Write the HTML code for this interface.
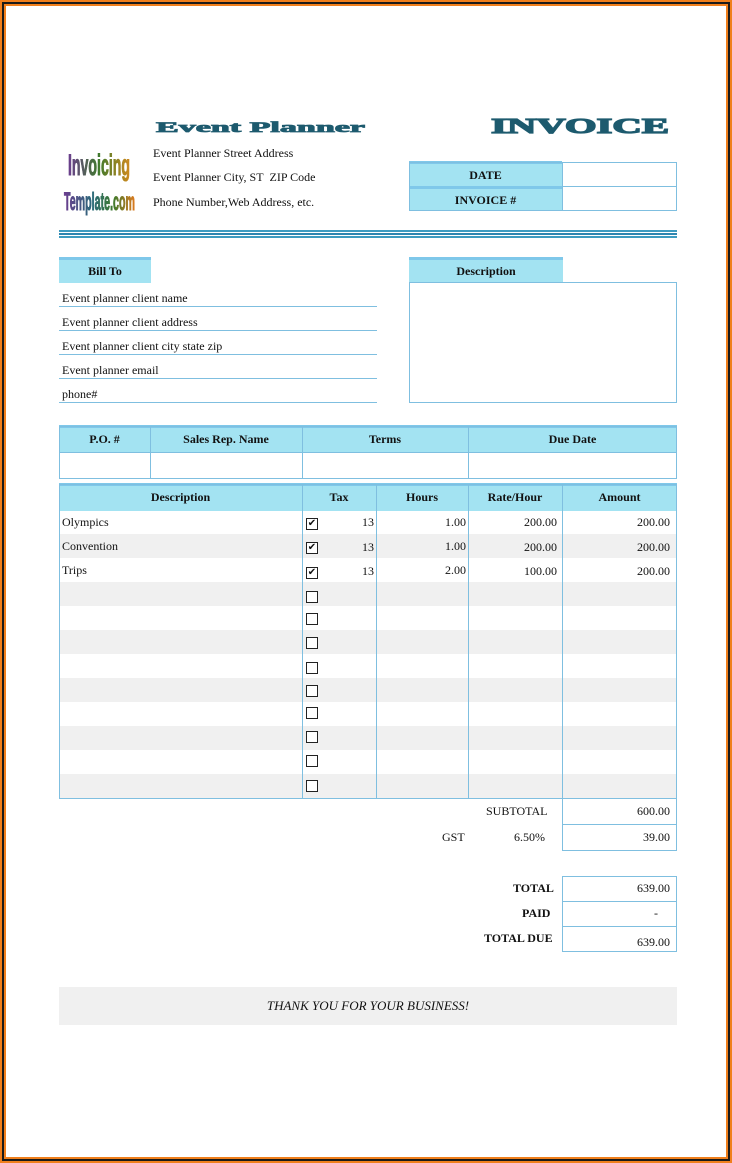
<!DOCTYPE html>
<html><head><style>
*{margin:0;padding:0;box-sizing:border-box}
body{width:732px;height:1163px;background:#fff;position:relative;font-family:"Liberation Serif",serif;font-size:12px;color:#111;overflow:hidden}
.frame{position:absolute;left:0;top:0;width:732px;height:1163px;border:2px solid #f07f1c;}
.frame2{position:absolute;left:2px;top:2px;width:728px;height:1159px;border:2px solid #1a1a1a;}
.frame3{position:absolute;left:4px;top:4px;width:724px;height:1155px;border:2px solid #f07f1c;}
.a{position:absolute}
.hd{background:#a3e3f2;font-weight:bold;text-align:center;border-top:3px solid #7fc8ea}
.bx{border:1px solid #7fbfe0}
.ln{position:absolute;height:1px;background:#7fbfe0}
.vl{position:absolute;width:1px;background:#7fbfe0}
.cb{position:absolute;width:12px;height:12px;border:1px solid #222;background:#fff;font-size:10px;line-height:10px;text-align:center}
.r{text-align:right}
</style></head><body>
<div class="frame"></div><div class="frame2"></div><div class="frame3"></div>

<svg class="a" style="left:0;top:0" width="732" height="230">
<defs>
<linearGradient id="g1" x1="0" x2="1"><stop offset="0" stop-color="#6b3d8f"/><stop offset="0.5" stop-color="#3f7a2c"/><stop offset="1" stop-color="#d08a1e"/></linearGradient>
<linearGradient id="g2" x1="0" x2="1"><stop offset="0" stop-color="#6b3d8f"/><stop offset="0.4" stop-color="#2a6a7a"/><stop offset="0.7" stop-color="#3f7a2c"/><stop offset="1" stop-color="#e07a1e"/></linearGradient>
</defs>
<text x="156" y="132" textLength="209" lengthAdjust="spacingAndGlyphs" font-family="Liberation Serif" font-weight="bold" font-size="15" fill="#1d5a6e" stroke="#1d5a6e" stroke-width="0.8">Event Planner</text>
<text x="491" y="133" textLength="178" lengthAdjust="spacingAndGlyphs" font-family="Liberation Serif" font-weight="bold" font-size="21" fill="#1d5a6e" stroke="#1d5a6e" stroke-width="1.2">INVOICE</text>
<text x="68" y="175" textLength="62" lengthAdjust="spacingAndGlyphs" font-family="Liberation Sans" font-weight="bold" font-size="30" fill="url(#g1)" stroke="url(#g1)" stroke-width="1">Invoicing</text>
<text x="64" y="210" textLength="71" lengthAdjust="spacingAndGlyphs" font-family="Liberation Sans" font-weight="bold" font-size="25" fill="url(#g2)" stroke="url(#g2)" stroke-width="1">Template.com</text>
</svg>
<div class="a" style="left:153px;top:146px">Event Planner Street Address</div>
<div class="a" style="left:153px;top:170px">Event Planner City, ST&nbsp; ZIP Code</div>
<div class="a" style="left:153px;top:195px">Phone Number,Web Address, etc.</div>

<div class="a hd" style="left:409px;top:161px;width:153px;height:25px;line-height:22px">DATE</div>
<div class="a hd" style="left:409px;top:186px;width:153px;height:25px;line-height:22px">INVOICE #</div>
<div class="a bx" style="left:409px;top:162px;width:268px;height:49px"></div>
<div class="ln" style="left:562px;top:186px;width:115px"></div>
<div class="vl" style="left:562px;top:162px;height:49px"></div>

<div class="a" style="left:59px;top:230px;width:618px;height:2px;background:#3d9bc0"></div>
<div class="a" style="left:59px;top:233px;width:618px;height:2px;background:#2e86b0"></div>
<div class="a" style="left:59px;top:236px;width:618px;height:2px;background:#3d9bc0"></div>

<div class="a hd" style="left:59px;top:257px;width:92px;height:26px;line-height:23px">Bill To</div>
<div class="a" style="left:62px;top:291px">Event planner client name</div>
<div class="a" style="left:62px;top:315px">Event planner client address</div>
<div class="a" style="left:62px;top:339px">Event planner client city state zip</div>
<div class="a" style="left:62px;top:363px">Event planner email</div>
<div class="a" style="left:62px;top:387px">phone#</div>
<div class="ln" style="left:59px;top:306px;width:318px"></div>
<div class="ln" style="left:59px;top:330px;width:318px"></div>
<div class="ln" style="left:59px;top:354px;width:318px"></div>
<div class="ln" style="left:59px;top:378px;width:318px"></div>
<div class="ln" style="left:59px;top:402px;width:318px"></div>

<div class="a hd" style="left:409px;top:257px;width:154px;height:26px;line-height:23px">Description</div>
<div class="a bx" style="left:409px;top:282px;width:268px;height:121px"></div>

<div class="a hd" style="left:59px;top:425px;width:618px;height:28px"></div>
<div class="a bx" style="left:59px;top:426px;width:618px;height:53px"></div>
<div class="ln" style="left:59px;top:452px;width:618px"></div>
<div class="vl" style="left:150px;top:426px;height:53px"></div>
<div class="vl" style="left:302px;top:426px;height:53px"></div>
<div class="vl" style="left:468px;top:426px;height:53px"></div>
<div class="a" style="left:59px;top:432px;width:91px;text-align:center;font-weight:bold">P.O. #</div>
<div class="a" style="left:150px;top:432px;width:152px;text-align:center;font-weight:bold">Sales Rep. Name</div>
<div class="a" style="left:302px;top:432px;width:166px;text-align:center;font-weight:bold">Terms</div>
<div class="a" style="left:468px;top:432px;width:209px;text-align:center;font-weight:bold">Due Date</div>

<div class="a hd" style="left:59px;top:483px;width:618px;height:28px"></div>
<div class="a" style="left:60px;top:534px;width:616px;height:24px;background:#f0f0f0"></div>
<div class="a" style="left:60px;top:582px;width:616px;height:24px;background:#f0f0f0"></div>
<div class="a" style="left:60px;top:630px;width:616px;height:24px;background:#f0f0f0"></div>
<div class="a" style="left:60px;top:678px;width:616px;height:24px;background:#f0f0f0"></div>
<div class="a" style="left:60px;top:726px;width:616px;height:24px;background:#f0f0f0"></div>
<div class="a" style="left:60px;top:774px;width:616px;height:24px;background:#f0f0f0"></div>
<div class="a bx" style="left:59px;top:484px;width:618px;height:315px"></div>
<div class="vl" style="left:302px;top:484px;height:315px"></div>
<div class="vl" style="left:376px;top:484px;height:315px"></div>
<div class="vl" style="left:468px;top:484px;height:315px"></div>
<div class="vl" style="left:562px;top:484px;height:315px"></div>
<div class="a" style="left:59px;top:490px;width:243px;text-align:center;font-weight:bold">Description</div>
<div class="a" style="left:302px;top:490px;width:74px;text-align:center;font-weight:bold">Tax</div>
<div class="a" style="left:376px;top:490px;width:92px;text-align:center;font-weight:bold">Hours</div>
<div class="a" style="left:468px;top:490px;width:94px;text-align:center;font-weight:bold">Rate/Hour</div>
<div class="a" style="left:562px;top:490px;width:115px;text-align:center;font-weight:bold">Amount</div>

<div class="a" style="left:62px;top:515px">Olympics</div>
<div class="a" style="left:62px;top:539px">Convention</div>
<div class="a" style="left:62px;top:563px">Trips</div>
<div class="a r" style="left:330px;top:515px;width:44px">13</div>
<div class="a r" style="left:330px;top:540px;width:44px">13</div>
<div class="a r" style="left:330px;top:564px;width:44px">13</div>
<div class="a r" style="left:380px;top:515px;width:86px">1.00</div>
<div class="a r" style="left:380px;top:539px;width:86px">1.00</div>
<div class="a r" style="left:380px;top:563px;width:86px">2.00</div>
<div class="a r" style="left:470px;top:515px;width:87px">200.00</div>
<div class="a r" style="left:470px;top:540px;width:87px">200.00</div>
<div class="a r" style="left:470px;top:564px;width:87px">100.00</div>
<div class="a r" style="left:565px;top:515px;width:105px">200.00</div>
<div class="a r" style="left:565px;top:540px;width:105px">200.00</div>
<div class="a r" style="left:565px;top:564px;width:105px">200.00</div>

<div class="cb" style="left:306px;top:518px">✔</div>
<div class="cb" style="left:306px;top:542px">✔</div>
<div class="cb" style="left:306px;top:567px">✔</div>
<div class="cb" style="left:306px;top:591px"></div>
<div class="cb" style="left:306px;top:613px"></div>
<div class="cb" style="left:306px;top:637px"></div>
<div class="cb" style="left:306px;top:662px"></div>
<div class="cb" style="left:306px;top:685px"></div>
<div class="cb" style="left:306px;top:707px"></div>
<div class="cb" style="left:306px;top:731px"></div>
<div class="cb" style="left:306px;top:755px"></div>
<div class="cb" style="left:306px;top:780px"></div>

<div class="a bx" style="left:562px;top:798px;width:115px;height:53px"></div>
<div class="ln" style="left:562px;top:824px;width:115px"></div>
<div class="a" style="left:486px;top:804px">SUBTOTAL</div>
<div class="a r" style="left:565px;top:804px;width:105px">600.00</div>
<div class="a" style="left:442px;top:830px">GST</div>
<div class="a" style="left:514px;top:830px">6.50%</div>
<div class="a r" style="left:565px;top:830px;width:105px">39.00</div>

<div class="a bx" style="left:562px;top:876px;width:115px;height:76px"></div>
<div class="ln" style="left:562px;top:901px;width:115px"></div>
<div class="ln" style="left:562px;top:926px;width:115px"></div>
<div class="a" style="left:513px;top:881px;font-weight:bold">TOTAL</div>
<div class="a" style="left:522px;top:906px;font-weight:bold">PAID</div>
<div class="a" style="left:484px;top:931px;font-weight:bold">TOTAL DUE</div>
<div class="a r" style="left:565px;top:881px;width:105px">639.00</div>
<div class="a r" style="left:565px;top:906px;width:93px">-</div>
<div class="a r" style="left:565px;top:935px;width:105px">639.00</div>

<div class="a" style="left:59px;top:987px;width:618px;height:38px;background:#f0f0f0;text-align:center;line-height:37px;font-style:italic;font-size:13px">THANK YOU FOR YOUR BUSINESS!</div>
</body></html>
